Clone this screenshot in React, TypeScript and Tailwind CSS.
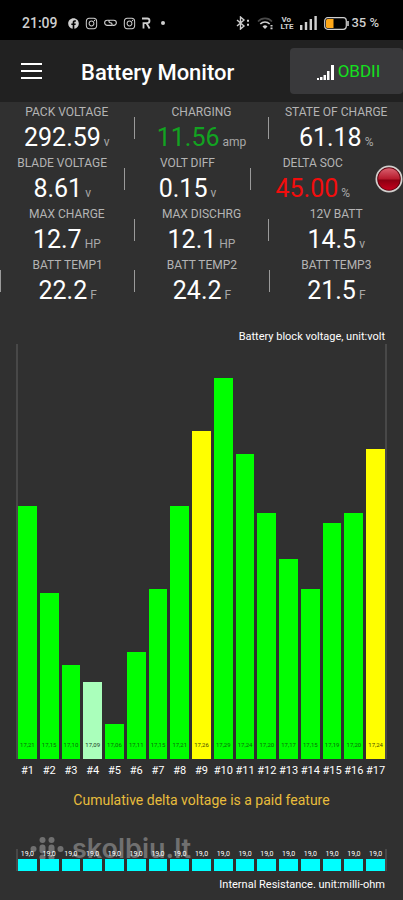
import { ReactNode } from 'react'
import { FaFacebook, FaInstagram } from 'react-icons/fa'

type Reading = {
  label: string
  value: string
  unit: string
  color?: string
}

const readings: Reading[][] = [
  [
    { label: 'PACK VOLTAGE', value: '292.59', unit: 'v' },
    { label: 'CHARGING', value: '11.56', unit: 'amp', color: 'text-[#12a321]' },
    { label: 'STATE OF CHARGE', value: '61.18', unit: '%' },
  ],
  [
    { label: 'BLADE VOLTAGE', value: '8.61', unit: 'v' },
    { label: 'VOLT DIFF', value: '0.15', unit: 'v' },
    { label: 'DELTA SOC', value: '45.00', unit: '%', color: 'text-[#f20d0d]' },
  ],
  [
    { label: 'MAX CHARGE', value: '12.7', unit: 'HP' },
    { label: 'MAX DISCHRG', value: '12.1', unit: 'HP' },
    { label: '12V BATT', value: '14.5', unit: 'v' },
  ],
  [
    { label: 'BATT TEMP1', value: '22.2', unit: 'F' },
    { label: 'BATT TEMP2', value: '24.2', unit: 'F' },
    { label: 'BATT TEMP3', value: '21.5', unit: 'F' },
  ],
]

// level is the bar height in percent of the plot
const blocks = [
  { volts: '17,21', level: 61 },
  { volts: '17,15', level: 40 },
  { volts: '17,10', level: 22.7 },
  { volts: '17,09', level: 18.6, tone: 'pale' },
  { volts: '17,06', level: 8.4 },
  { volts: '17,11', level: 25.8 },
  { volts: '17,15', level: 41 },
  { volts: '17,21', level: 61 },
  { volts: '17,26', level: 79, tone: 'yellow' },
  { volts: '17,29', level: 91.8 },
  { volts: '17,24', level: 73.5 },
  { volts: '17,20', level: 59.3 },
  { volts: '17,17', level: 48.2 },
  { volts: '17,15', level: 41 },
  { volts: '17,19', level: 56.9 },
  { volts: '17,20', level: 59.3 },
  { volts: '17,24', level: 74.7, tone: 'yellow' },
]

const tones: Record<string, string> = {
  green: 'bg-[#00ff00] text-[#0a6b0a]',
  yellow: 'bg-[#ffff00] text-[#4a4a00]',
  pale: 'bg-[#aaffbb] text-[#1f3a25]',
}

function StatusBar() {
  return (
    <div className="flex h-10 items-center bg-black pt-1.5 pl-[22px] pr-6 text-[#cfcfcf]">
      <span className="text-sm font-medium">21:09</span>
      <div className="ml-2.5 flex items-center gap-1.5">
        <FaFacebook size={11} />
        <FaInstagram size={13} />
        <svg width="13" height="8" viewBox="0 0 14 8" fill="none" stroke="currentColor" strokeWidth="1.2">
          <path d="M6 1H3.500a2.700 2.700 0 0 0 0 5.600H7.500C9.200 6.600 9 4.300 7.500 3.900L6.500 3.700C5 3.300 4.800 1 6.500 1H10.500a2.700 2.700 0 0 1 0 5.600H9" />
        </svg>
        <FaInstagram size={13} />
        <svg width="9" height="12" viewBox="0 0 9 12" fill="none" stroke="currentColor" strokeWidth="1.8">
          <path d="M0 1.500h5.200a2.300 2.300 0 0 1 0 4.600H1.500V11.500M4.500 6.200 7.600 11.500" />
        </svg>
        <span className="ml-1 size-1 rounded-full bg-current" />
      </div>
      <div className="ml-auto flex items-center gap-[7px]">
        <svg width="14" height="14" viewBox="0 0 14 14" fill="none" stroke="currentColor" strokeWidth="1.4">
          <path d="M1 4l7 6-3.500 3V1L8 4l-7 6" />
          <path d="M11 4.700h2M11 8.700h2" strokeWidth="2" />
        </svg>
        <svg width="17" height="13" viewBox="0 0 17 13" fill="none" stroke="currentColor" strokeWidth="1.6">
          <path d="M1 4.500a9.500 9.500 0 0 1 14 0" stroke="#4a4a4a" />
          <path d="M3.300 7a6.600 6.600 0 0 1 9.400 0" />
          <path d="M5.500 9.400a3.600 3.600 0 0 1 5 0L8 12z" fill="currentColor" stroke="none" />
          <path d="M14.500 8v1.600M14.500 10.600v1.600" strokeWidth="2" />
        </svg>
        <div className="text-[8px] leading-[7px] font-bold">
          <div className="pl-px">Vo</div>
          <div>LTE</div>
        </div>
        <svg width="17" height="14" viewBox="0 0 17 14" fill="currentColor">
          <path d="M0 9h2.400v5H0zM4.800 6h2.400v8H4.800zM9.600 3H12v11H9.600zM14.400 0h2.400v14h-2.400z" />
        </svg>
        <div className="flex items-center">
          <svg width="25" height="13" viewBox="0 0 25 13" fill="none">
            <rect x="0.700" y="0.700" width="21.600" height="11.600" rx="3" stroke="currentColor" strokeWidth="1.2" />
            <path d="M3.500 2h6v9h-6A1.500 1.500 0 0 1 2 9.500V3.500A1.500 1.500 0 0 1 3.500 2z" fill="#ffa818" />
            <path d="M24 4v5" stroke="currentColor" strokeWidth="1.6" />
          </svg>
          <span className="ml-0.5 text-[13px] font-medium">35 %</span>
        </div>
      </div>
    </div>
  )
}

function Header() {
  return (
    <header className="flex h-[62px] items-center bg-[#212121] pl-[21px]">
      <button aria-label="Open menu" className="flex w-[21px] flex-col gap-[5px]">
        <span className="h-0.5 w-full bg-white" />
        <span className="h-0.5 w-full bg-white" />
        <span className="h-0.5 w-full bg-white" />
      </button>
      <h1 className="ml-[39px] pt-0.5 text-[22px] font-medium text-white">Battery Monitor</h1>
      <button className="ml-auto flex h-[46px] w-[113px] items-center justify-center gap-1 rounded bg-[#39393b] pt-0.5 pl-1 text-[17px] text-[#14e01e]">
        <svg width="17" height="15" viewBox="0 0 17 15" fill="#fff">
          <path d="M0 13h2v2H0zM3 12h2.500v3H3zM6.500 10H9v5H6.500zM10 6h2.500v9H10zM14 0h3v15h-3z" />
        </svg>
        OBDII
      </button>
    </header>
  )
}

function Divider() {
  return <span className="h-[22px] w-px bg-[#9a9a9a]" />
}

function ReadingCell({ label, value, unit, color = 'text-white' }: Reading) {
  return (
    <div className="flex-1 pt-0.5 whitespace-nowrap">
      <div className="text-center text-xs leading-4 text-[#b4b4b4]">{label}</div>
      <div className="flex items-baseline justify-center gap-[3px] pt-0.5">
        <span className={`text-[25px] leading-8 ${color}`}>{value}</span>
        <span className="text-xs text-[#a8a8a8]">{unit}</span>
      </div>
    </div>
  )
}

function ReadingRow({ items, lead, trail }: { items: Reading[]; lead?: boolean; trail?: ReactNode }) {
  return (
    <div className="flex h-[51px] items-center">
      {lead && <Divider />}
      <ReadingCell {...items[0]} />
      <Divider />
      <ReadingCell {...items[1]} />
      <Divider />
      <ReadingCell {...items[2]} />
      {trail}
    </div>
  )
}

function RecordLamp() {
  return (
    <button aria-label="Record" className="w-7">
      <svg width="28" height="28" viewBox="0 0 28 28">
        <defs>
          <linearGradient id="lamp" x1="0" y1="0" x2="0" y2="1">
            <stop offset="0" stopColor="#d9606e" />
            <stop offset="0.48" stopColor="#b81c2e" />
            <stop offset="0.56" stopColor="#8c0012" />
            <stop offset="1" stopColor="#c4001c" />
          </linearGradient>
        </defs>
        <circle cx="14" cy="14" r="13.500" fill="#d2d0ce" />
        <circle cx="14" cy="14" r="11.800" fill="#5a000c" />
        <circle cx="14" cy="14" r="10.800" fill="url(#lamp)" />
      </svg>
    </button>
  )
}

function VoltageChart() {
  return (
    <section className="mt-6 px-4 text-[11px] text-white">
      <h2 className="pr-0.5 text-right leading-[14px]">Battery block voltage, unit:volt</h2>
      <div className="flex h-[415px] items-end gap-[3px] border-x-2 border-[#484848]">
        {blocks.map((b, i) => (
          <div
            key={i}
            className={`flex flex-1 items-end justify-center pb-2.5 text-[6px] leading-[8px] ${tones[b.tone ?? 'green']}`}
            style={{ height: `${b.level}%` }}
          >
            {b.volts}
          </div>
        ))}
      </div>
      <div className="flex gap-[3px] px-0.5 leading-6">
        {blocks.map((_, i) => (
          <span key={i} className="flex w-0 flex-1 justify-center">#{i + 1}</span>
        ))}
      </div>
    </section>
  )
}

function Watermark() {
  return (
    <div className="absolute top-0 left-[30px] flex items-center gap-2 text-[#707070]">
      <svg width="34" height="24" viewBox="0 0 34 24" fill="currentColor">
        <circle cx="3.500" cy="12" r="3" />
        <circle cx="12.500" cy="3" r="3" />
        <circle cx="21.500" cy="3" r="3" />
        <circle cx="30.500" cy="12" r="3" />
        <rect x="9.500" y="7.500" width="6" height="9" rx="3" />
        <rect x="18.500" y="7.500" width="6" height="9" rx="3" />
        <circle cx="12.500" cy="20.500" r="3" />
        <circle cx="21.500" cy="20.500" r="3" />
      </svg>
      <span className="font-[Inter] text-[27px] leading-6 font-semibold">skolbiu.lt</span>
    </div>
  )
}

function ResistanceChart() {
  return (
    <section className="relative mt-[27px] px-4 pt-3 text-white">
      <Watermark />
      <div className="relative flex gap-[3px] border-x-2 border-[#484848]">
        {blocks.map((_, i) => (
          <div key={i} className="flex-1 text-center text-[7px] leading-[10px]">
            19,0
            <div className="h-3 bg-[#00ffff]" />
          </div>
        ))}
      </div>
      <h2 className="pt-1 pr-0.5 text-right text-[11px] leading-5">Internal Resistance. unit:milli-ohm</h2>
    </section>
  )
}

export default function App() {
  return (
    <div className="min-h-screen bg-[#303030] font-[Roboto,sans-serif]">
      <StatusBar />
      <Header />
      <main>
        <ReadingRow items={readings[0]} />
        <ReadingRow items={readings[1]} trail={<RecordLamp />} />
        <ReadingRow items={readings[2]} />
        <ReadingRow items={readings[3]} lead />
        <VoltageChart />
        <p className="mt-[7px] text-center text-sm leading-5 text-[#e8bd3c]">Cumulative delta voltage is a paid feature</p>
        <ResistanceChart />
      </main>
    </div>
  )
}
